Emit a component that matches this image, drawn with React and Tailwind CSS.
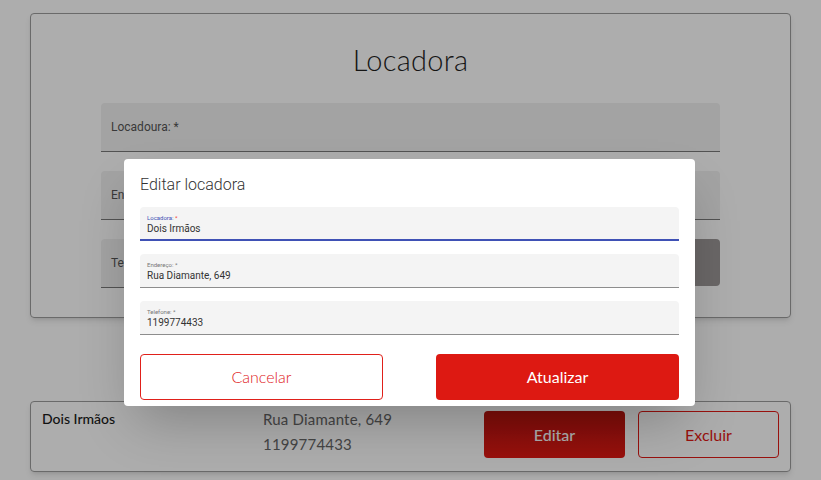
import React from 'react';

const quick = { fontFamily: 'Lato, "Open Sans", sans-serif' };
const roboto = { fontFamily: 'Roboto, "Liberation Sans", sans-serif' };

function PageField({ label, className = '' }) {
  return (
    <div className={`h-[49px] flex items-center rounded-t bg-[#f1f1f1] border-b border-[#7a7a7a] px-[10px] ${className}`}>
      <span className="text-[12px] text-[#555]" style={roboto}>{label}</span>
    </div>
  );
}

function ModalField({ label, value, focused }) {
  return (
    <div
      className={`h-[34px] rounded-t bg-[#f4f4f4] px-[7px] pt-[7px] ${focused ? 'border-b-2 border-[#3f51b5]' : 'border-b border-[#8d8d8d]'}`}
      style={roboto}
    >
      <div className={`text-[6px] leading-[7px] ${focused ? 'text-[#3f51b5]' : 'text-[#777]'}`}>
        {label} <span className={focused ? 'text-[#f44336]' : ''}>*</span>
      </div>
      <div className="text-[10px] leading-[14px] text-[#333] mt-[1px]">{value}</div>
    </div>
  );
}

export default function App() {
  return (
    <div className="relative min-h-[480px] bg-white overflow-hidden px-[30px] pt-[13px]">
      {/* formulário */}
      <div className="h-[305px] rounded border border-[#9c9c9c] shadow-md pt-[29px]">
        <h1 className="text-center text-[29px] font-light leading-[33px] text-[#1e1e1e] tracking-[0.3px]" style={quick}>Locadora</h1>
        <div className="mx-auto w-[619px] mt-[27px] flex flex-col gap-[19px]">
          <PageField label="Locadoura: *" />
          <PageField label="Endereço: *" />
          <div className="flex gap-4">
            <PageField label="Telefone: *" className="flex-1" />
            <button className="w-[150px] h-[47px] rounded bg-[#9c9898] text-white text-sm">Cadastrar</button>
          </div>
        </div>
      </div>

      {/* lista */}
      <div className="mt-[83px] h-[71px] rounded border border-[#9c9c9c] shadow-md flex pl-[11px] pr-[11px]" style={quick}>
        <div className="w-[221px] pt-[6px] text-[14px] font-medium text-[#1b1b1b]">Dois Irmãos</div>
        <div className="flex-1 pt-[5px] text-[15px] text-[#666] leading-[25px] tracking-[0.2px]">
          <div>Rua Diamante, 649</div>
          <div>1199774433</div>
        </div>
        <div className="flex gap-[13px] pt-[9px]">
          <button className="w-[141px] h-[47px] rounded bg-gradient-to-b from-[#b7140f] to-[#e21914] text-white text-[16px] font-medium">Editar</button>
          <button className="w-[141px] h-[47px] rounded border border-[#e11a16] text-[#e11a16] text-[16px]">Excluir</button>
        </div>
      </div>

      {/* overlay + modal */}
      <div className="absolute inset-0 bg-black/[0.32] flex pt-[159px] pl-[124px]">
        <div className="w-[571px] h-[247px] rounded bg-white shadow-2xl px-4 pt-[15px] overflow-hidden">
          <h2 className="text-[16px] font-light text-[#333] leading-[22px]" style={roboto}>Editar locadora</h2>
          <div className="mt-[11px] flex flex-col gap-[13px]">
            <ModalField label="Locadora:" value="Dois Irmãos" focused />
            <ModalField label="Endereço:" value="Rua Diamante, 649" />
            <ModalField label="Telefone:" value="1199774433" />
          </div>
          <div className="mt-[19px] flex justify-between" style={quick}>
            <button className="w-[243px] h-[46px] rounded border border-[#e0201a] text-[#e0201a] text-[16px] font-light">Cancelar</button>
            <button className="w-[243px] h-[46px] rounded bg-[#dd1912] text-white text-[16px]">Atualizar</button>
          </div>
        </div>
      </div>
    </div>
  );
}
